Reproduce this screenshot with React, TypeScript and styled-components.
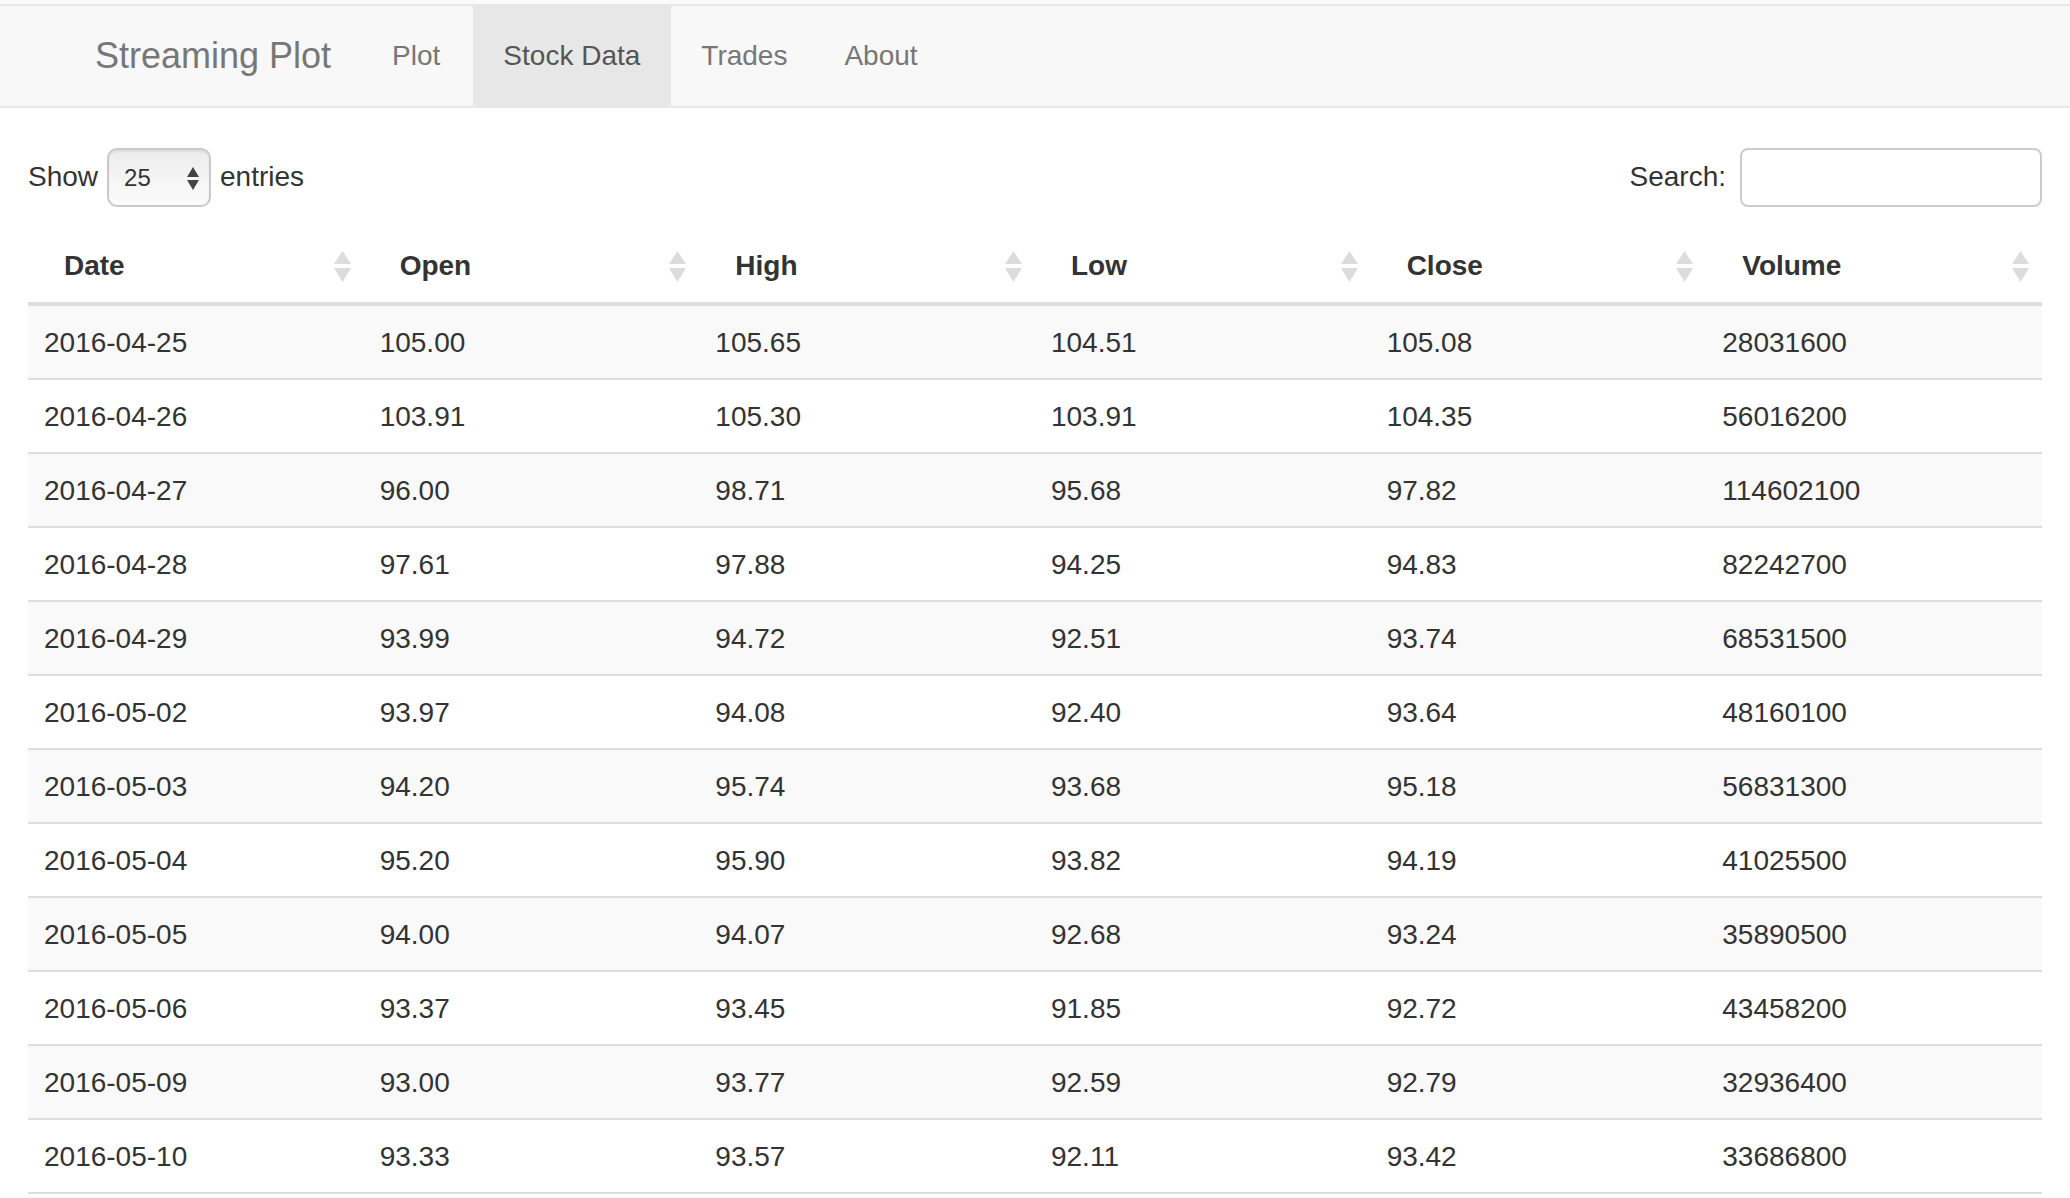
import React from "react";
import styled, { createGlobalStyle } from "styled-components";

const GlobalStyle = createGlobalStyle`
  html, body {
    margin: 0;
    padding: 0;
    background: #ffffff;
  }
  body {
    font-family: "Liberation Sans", Arial, Helvetica, sans-serif;
    color: #333333;
    font-size: 28px;
  }
`;

const Page = styled.div`
  padding-top: 4px;
  background: #fbfbfb;
`;

const Navbar = styled.nav`
  display: flex;
  align-items: stretch;
  height: 100px;
  padding-left: 65px;
  background: #f8f8f8;
  border-top: 2px solid #e7e7e7;
  border-bottom: 2px solid #e7e7e7;
`;

const Brand = styled.a`
  padding: 0 31px 0 30px;
  font-size: 36px;
  line-height: 100px;
  color: #777777;
  text-decoration: none;
`;

const NavLink = styled.a<{ $active?: boolean; $extra?: number }>`
  padding: 0 ${(p) => 30 + (p.$extra ?? 0)}px 0 30px;
  font-size: 28px;
  line-height: 100px;
  color: ${(p) => (p.$active ? "#555555" : "#777777")};
  background: ${(p) => (p.$active ? "#e7e7e7" : "transparent")};
  text-decoration: none;
`;

const Content = styled.main`
  background: #ffffff;
  padding: 40px 28px 0 28px;
`;

const Controls = styled.div`
  display: flex;
  justify-content: space-between;
  align-items: center;
  height: 59px;
`;

const Label = styled.label`
  display: flex;
  align-items: center;
  font-size: 28px;
  color: #333333;
  margin-top: -2px;
`;

const SelectWrap = styled.span`
  position: relative;
  display: inline-block;
  margin: 2px 9px 0 9px;
  width: 104px;
  height: 59px;
`;

const Select = styled.select`
  appearance: none;
  -webkit-appearance: none;
  width: 104px;
  height: 59px;
  box-sizing: border-box;
  padding: 0 0 0 15px;
  border: 2px solid #c9c9c9;
  border-radius: 10px;
  background: linear-gradient(#ececec, #f6f6f6 60%, #fbfbfb);
  box-shadow: inset 0 2px 2px rgba(0, 0, 0, 0.06);
  font-family: "Liberation Sans", Arial, sans-serif;
  font-size: 24px;
  color: #333333;
  outline: none;
`;

const SelectArrows = styled.svg`
  position: absolute;
  right: 12px;
  top: 19px;
  pointer-events: none;
`;

const SearchInput = styled.input`
  box-sizing: border-box;
  width: 302px;
  height: 59px;
  margin: 2px 0 0 14px;
  border: 2px solid #cccccc;
  border-radius: 8px;
  background: #ffffff;
  outline: none;
`;

const Table = styled.table`
  width: 100%;
  margin-top: 19px;
  border-collapse: separate;
  border-spacing: 0;
  table-layout: fixed;
`;

const Th = styled.th`
  position: relative;
  padding: 20px 36px 16px 36px;
  text-align: left;
  font-size: 28px;
  font-weight: bold;
  line-height: 40px;
  color: #333333;
  border-bottom: 4px solid #dddddd;
`;

const SortIcon = styled.svg`
  position: absolute;
  right: 13px;
  top: 25px;
`;

const Row = styled.tr`
  &:nth-child(odd) {
    background: #f9f9f9;
  }
`;

const Td = styled.td`
  padding: 17px 16px 15px 16px;
  font-size: 28px;
  line-height: 40px;
  color: #333333;
  border-bottom: 2px solid #dddddd;
  white-space: nowrap;
`;

const columns = ["Date", "Open", "High", "Low", "Close", "Volume"];

const rows: string[][] = [
  ["2016-04-25", "105.00", "105.65", "104.51", "105.08", "28031600"],
  ["2016-04-26", "103.91", "105.30", "103.91", "104.35", "56016200"],
  ["2016-04-27", "96.00", "98.71", "95.68", "97.82", "114602100"],
  ["2016-04-28", "97.61", "97.88", "94.25", "94.83", "82242700"],
  ["2016-04-29", "93.99", "94.72", "92.51", "93.74", "68531500"],
  ["2016-05-02", "93.97", "94.08", "92.40", "93.64", "48160100"],
  ["2016-05-03", "94.20", "95.74", "93.68", "95.18", "56831300"],
  ["2016-05-04", "95.20", "95.90", "93.82", "94.19", "41025500"],
  ["2016-05-05", "94.00", "94.07", "92.68", "93.24", "35890500"],
  ["2016-05-06", "93.37", "93.45", "91.85", "92.72", "43458200"],
  ["2016-05-09", "93.00", "93.77", "92.59", "92.79", "32936400"],
  ["2016-05-10", "93.33", "93.57", "92.11", "93.42", "33686800"],
];

const Sort = () => (
  <SortIcon width="17" height="31" viewBox="0 0 17 31">
    <polygon points="8.5,0 17,13 0,13" fill="#dcdcdc" />
    <polygon points="0,17 17,17 8.5,31" fill="#dcdcdc" />
  </SortIcon>
);

export default function App() {
  return (
    <>
      <GlobalStyle />
      <Page>
        <Navbar>
          <Brand>Streaming Plot</Brand>
          <NavLink $extra={3}>Plot</NavLink>
          <NavLink $active $extra={1}>Stock Data</NavLink>
          <NavLink $extra={-3}>Trades</NavLink>
          <NavLink>About</NavLink>
        </Navbar>
        <Content>
          <Controls>
            <Label>
              Show
              <SelectWrap>
                <Select defaultValue="25">
                  <option value="10">10</option>
                  <option value="25">25</option>
                  <option value="50">50</option>
                  <option value="100">100</option>
                </Select>
                <SelectArrows width="12" height="23" viewBox="0 0 12 23">
                  <polygon points="6,0 12,10 0,10" fill="#444" />
                  <polygon points="0,13 12,13 6,23" fill="#444" />
                </SelectArrows>
              </SelectWrap>
              entries
            </Label>
            <Label>
              Search:
              <SearchInput type="search" />
            </Label>
          </Controls>
          <Table>
            <thead>
              <tr>
                {columns.map((c) => (
                  <Th key={c}>
                    {c}
                    <Sort />
                  </Th>
                ))}
              </tr>
            </thead>
            <tbody>
              {rows.map((r) => (
                <Row key={r[0]}>
                  {r.map((v, i) => (
                    <Td key={i}>{v}</Td>
                  ))}
                </Row>
              ))}
            </tbody>
          </Table>
        </Content>
      </Page>
    </>
  );
}
